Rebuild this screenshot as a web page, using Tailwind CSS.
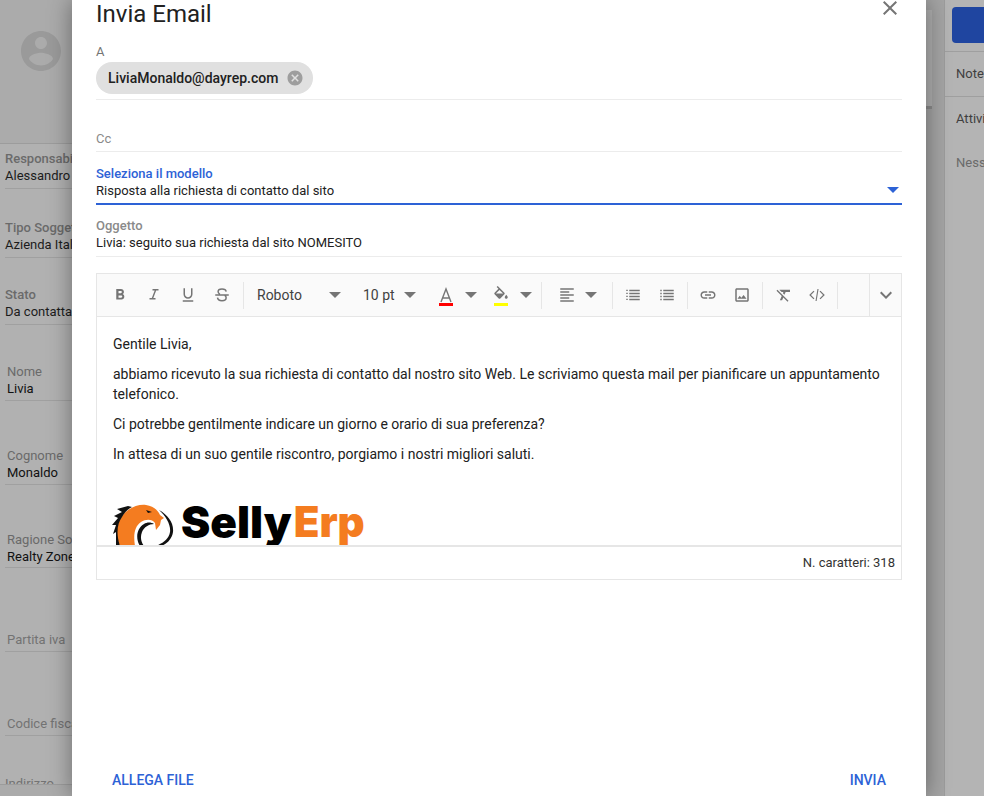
<!DOCTYPE html>
<html lang="it">
<head>
<meta charset="utf-8">
<title>Invia Email</title>
<script src="https://cdn.jsdelivr.net/npm/@tailwindcss/browser@4"></script>
</head>
<body class="bg-[#b2b2b2] font-['Roboto',sans-serif]">
<div class="flex h-[796px] w-[984px] overflow-hidden">

  <!-- scheda contatto, sotto la modale -->
  <aside class="w-[72px] shrink-0 overflow-hidden bg-[#b1b1b1] text-[13px] leading-[17px] whitespace-nowrap">
    <div class="flex h-[144px] border-b border-[#9c9c9c] bg-[#ababab] pl-[21px] pt-[31px]">
      <svg class="h-[40px] w-[40px] fill-[#9a9a9a]" viewBox="2 2 20 20"><path d="M12 2C6.48 2 2 6.48 2 12s4.48 10 10 10 10-4.48 10-10S17.52 2 12 2zm0 3c1.66 0 3 1.34 3 3s-1.34 3-3 3-3-1.34-3-3 1.34-3 3-3zm0 14.2c-2.5 0-4.71-1.28-6-3.22.03-1.99 4-3.08 6-3.08 1.99 0 5.97 1.09 6 3.08-1.29 1.94-3.5 3.22-6 3.22z"/></svg>
    </div>
    <div class="ml-[5px] mt-[6px] h-[39px] border-b border-[#a0a0a0] text-[#1c1c1c]"><p class="font-medium text-[#6a6a6a]">Responsabile</p><p>Alessandro</p></div>
    <div class="ml-[5px] mt-[30px] h-[39px] border-b border-[#a0a0a0] text-[#1c1c1c]"><p class="font-medium text-[#6a6a6a]">Tipo Soggetto</p><p>Azienda Italiana</p></div>
    <div class="ml-[5px] mt-[28px] h-[39px] border-b border-[#a0a0a0] text-[#1c1c1c]"><p class="font-medium text-[#6a6a6a]">Stato</p><p>Da contattare</p></div>
    <div class="ml-[5px] mt-[38px] h-[38px] border-b border-[#a0a0a0] pl-[2px] text-[#111]"><p class="text-[#6a6a6a]">Nome</p><p>Livia</p></div>
    <div class="ml-[5px] mt-[46px] h-[38px] border-b border-[#a0a0a0] pl-[2px] text-[#111]"><p class="text-[#6a6a6a]">Cognome</p><p>Monaldo</p></div>
    <div class="ml-[5px] mt-[46px] h-[37px] border-b border-[#a0a0a0] pl-[2px] text-[#111]"><p class="text-[#6a6a6a]">Ragione Sociale</p><p>Realty Zone</p></div>
    <div class="ml-[5px] mt-[63px] h-[21px] border-b border-[#a0a0a0] pl-[2px] text-[#737373]"><p>Partita iva</p></div>
    <div class="ml-[5px] mt-[63px] h-[21px] border-b border-[#a0a0a0] pl-[2px] text-[#737373]"><p>Codice fiscale</p></div>
    <div class="h-[48px] overflow-hidden pl-[5px] pt-[39px] text-[#737373]"><p>Indirizzo</p></div>
    <div class="h-[13px] border-t border-[#9c9c9c] bg-[#ababab]"></div>
  </aside>

  <!-- modale -->
  <main class="relative z-10 flex w-[854px] shrink-0 flex-col bg-white px-[24px] shadow-[0_0_22px_rgba(0,0,0,0.4)]">
    <div class="flex h-[43px] items-start justify-between">
      <h1 class="text-[24px] leading-[28px] text-[#212121]">Invia Email</h1>
      <button class="mt-[-4px]"><svg class="h-[24px] w-[24px] fill-[#757575]" viewBox="0 0 24 24"><path d="M19 6.41L17.59 5 12 10.59 6.41 5 5 6.41 10.59 12 5 17.59 6.41 19 12 13.41 17.59 19 19 17.59 13.41 12 19 6.41z"/></svg></button>
    </div>

    <div class="h-[57px] border-b border-[#ececec] pt-[1px]">
      <label class="block text-[13px] leading-[16px] text-[#757575]">A</label>
      <div class="mt-[2px] flex h-[32px] w-[217px] items-center justify-between rounded-full bg-[#e0e0e0] pl-[12px] pr-[9px] text-[14px] font-medium text-[#212121]">
        <span>LiviaMonaldo@dayrep.com</span>
        <svg class="h-[18px] w-[18px] fill-[#9e9e9e]" viewBox="0 0 24 24"><path d="M12 2C6.47 2 2 6.47 2 12s4.47 10 10 10 10-4.47 10-10S17.53 2 12 2zm5 13.59L15.59 17 12 13.41 8.41 17 7 15.59 10.59 12 7 8.41 8.41 7 12 10.59 15.59 7 17 8.41 13.41 12 17 15.59z"/></svg>
      </div>
    </div>

    <div class="mt-[31px] h-[21px] border-b border-[#ececec] text-[13px] leading-[16px] text-[#8a8a8a]">Cc</div>

    <div class="relative mt-[13px] h-[40px] border-b-2 border-[#2d62d6] text-[13px] leading-[17px]">
      <label class="block font-medium text-[#2d62d6]">Seleziona il modello</label>
      <p class="text-[#212121]">Risposta alla richiesta di contatto dal sito</p>
      <span class="absolute right-[3px] top-[22px] h-0 w-0 border-x-[6px] border-t-[6px] border-x-transparent border-t-[#2d62d6]"></span>
    </div>

    <div class="mt-[12px] h-[40px] border-b border-[#ececec] text-[13px] leading-[17px]">
      <label class="block font-medium text-[#8a8a8a]">Oggetto</label>
      <p class="text-[#212121]">Livia: seguito sua richiesta dal sito NOMESITO</p>
    </div>

    <!-- editor -->
    <section class="mt-[16px] h-[307px] border border-[#e6e6e6]">
      <div class="flex h-[43px] items-center border-b border-[#e6e6e6] bg-[#fafafa] pl-[6px] text-[14px] text-[#424242]">
        <button class="flex w-[34px] justify-center"><svg class="h-[18px] w-[18px] fill-[#757575]" viewBox="0 0 24 24"><path d="M15.6 10.79c.97-.67 1.65-1.77 1.65-2.79 0-2.26-1.75-4-4-4H7v14h7.04c2.09 0 3.71-1.7 3.71-3.79 0-1.52-.86-2.82-2.15-3.42zM10 6.5h3c.83 0 1.5.67 1.5 1.5s-.67 1.5-1.5 1.5h-3v-3zm3.5 9H10v-3h3.5c.83 0 1.5.67 1.5 1.5s-.67 1.5-1.5 1.5z"/></svg></button>
        <button class="flex w-[34px] justify-center"><svg class="h-[18px] w-[18px] fill-[#757575]" viewBox="0 0 24 24"><path d="M10 4v2h2.9l-3.8 10H6v2h8v-2h-2.9l3.8-10H18V4z"/></svg></button>
        <button class="flex w-[34px] justify-center"><svg class="h-[18px] w-[18px] fill-[#757575]" viewBox="0 0 24 24"><path d="M12 17c3.31 0 6-2.69 6-6V3h-2v8c0 2.2-1.8 4-4 4s-4-1.8-4-4V3H6v8c0 3.31 2.69 6 6 6zm-7 2v2h14v-2H5z"/></svg></button>
        <button class="flex w-[34px] justify-center"><svg class="h-[18px] w-[18px] fill-none stroke-[#757575] stroke-2" viewBox="0 0 24 24"><path d="M17.5 7.5C17.2 5 15 4 12 4 9 4 6.8 5.3 6.8 7.6c0 1.5 1 2.4 2.4 3.4M3 12h18M15.8 12.5c1 .8 1.700 1.600 1.700 3 0 2.700-2.500 4-5.500 4-3.200 0-5.700-1.300-6-4"/></svg></button>
        <span class="ml-[4px] h-[27px] w-px bg-[#e6e6e6]"></span>

        <button class="ml-[13px] flex w-[84px] items-center justify-between">Roboto<span class="h-0 w-0 border-x-[6px] border-t-[6px] border-x-transparent border-t-[#757575]"></span></button>
        <button class="ml-[22px] flex w-[53px] items-center justify-between">10 pt<span class="h-0 w-0 border-x-[6px] border-t-[6px] border-x-transparent border-t-[#757575]"></span></button>

        <button class="relative ml-[13px] flex w-[34px] justify-center"><svg class="h-[18px] w-[18px] fill-none stroke-[#757575] stroke-[1.4]" viewBox="0 0 18 18"><path d="M4 16L9 3l5 13M5.5 12h7"/></svg><span class="absolute bottom-[-2px] left-[10px] h-[3px] w-[14px] bg-[#ff0000]"></span></button>
        <span class="ml-[2px] h-0 w-0 border-x-[6px] border-t-[6px] border-x-transparent border-t-[#757575]"></span>
        <button class="relative ml-[7px] flex w-[34px] justify-center"><svg class="h-[18px] w-[18px] fill-[#757575]" viewBox="0 0 24 24"><path d="M16.56 8.94L7.62 0 6.21 1.41l2.38 2.38-5.15 5.15c-.59.59-.59 1.54 0 2.12l5.5 5.5c.29.29.68.44 1.06.44s.77-.15 1.06-.44l5.5-5.5c.59-.58.59-1.53 0-2.12zM5.21 10L10 5.21 14.79 10H5.21zM19 11.5s-2 2.17-2 3.5c0 1.1.9 2 2 2s2-.9 2-2c0-1.33-2-3.5-2-3.5z"/></svg><span class="absolute bottom-[-2px] left-[10px] h-[3px] w-[14px] bg-[#ffff00]"></span></button>
        <span class="ml-[2px] h-0 w-0 border-x-[6px] border-t-[6px] border-x-transparent border-t-[#757575]"></span>
        <span class="ml-[9px] h-[27px] w-px bg-[#e6e6e6]"></span>

        <button class="ml-[8px] flex w-[34px] justify-center"><svg class="h-[18px] w-[18px] fill-[#757575]" viewBox="0 0 24 24"><path d="M15 15H3v2h12v-2zm0-8H3v2h12V7zM3 13h18v-2H3v2zm0 8h18v-2H3v2zM3 3v2h18V3H3z"/></svg></button>
        <span class="ml-[1px] h-0 w-0 border-x-[6px] border-t-[6px] border-x-transparent border-t-[#757575]"></span>
        <span class="ml-[15px] h-[27px] w-px bg-[#e6e6e6]"></span>

        <button class="ml-[3px] flex w-[34px] justify-center"><svg class="h-[18px] w-[18px] fill-[#757575]" viewBox="0 0 24 24"><path d="M3 5h2v1.500H3zM3 9h2v1.500H3zM3 13h2v1.500H3zM3 17h2v1.500H3zM7 5h14v2H7zM7 9h14v2H7zM7 13h14v2H7zM7 17h14v2H7z"/></svg></button>
        <button class="flex w-[34px] justify-center"><svg class="h-[18px] w-[18px] fill-[#757575]" viewBox="0 0 24 24"><path d="M3 5h2v2H3zM3 9h2v2H3zM3 13h2v2H3zM3 17h2v2H3zM7 5h14v2H7zM7 9h14v2H7zM7 13h14v2H7zM7 17h14v2H7z"/></svg></button>
        <span class="ml-[3px] h-[27px] w-px bg-[#e6e6e6]"></span>

        <button class="ml-[3px] flex w-[34px] justify-center"><svg class="h-[18px] w-[18px] fill-[#757575]" viewBox="0 0 24 24"><path d="M3.9 12c0-1.71 1.39-3.1 3.1-3.1h4V7H7c-2.76 0-5 2.24-5 5s2.24 5 5 5h4v-1.9H7c-1.71 0-3.1-1.39-3.1-3.1zM8 13h8v-2H8v2zm9-6h-4v1.9h4c1.71 0 3.1 1.39 3.1 3.1s-1.39 3.1-3.1 3.1h-4V17h4c2.76 0 5-2.24 5-5s-2.24-5-5-5z"/></svg></button>
        <button class="flex w-[34px] justify-center"><svg class="h-[18px] w-[18px] fill-[#757575]" viewBox="0 0 24 24"><path d="M19 5v14H5V5h14m0-2H5c-1.1 0-2 .9-2 2v14c0 1.1.9 2 2 2h14c1.1 0 2-.9 2-2V5c0-1.1-.9-2-2-2zm-4.86 8.86l-3 3.87L9 13.14 6 17h12l-3.86-5.14z"/></svg></button>
        <span class="ml-[3px] h-[27px] w-px bg-[#e6e6e6]"></span>

        <button class="ml-[4px] flex w-[33px] justify-center"><svg class="h-[18px] w-[18px] fill-[#757575]" viewBox="0 0 24 24"><path d="M3.27 5L2 6.27l6.97 6.97L6.5 19h3l1.57-3.66L16.73 21 18 19.73 3.55 5.27 3.27 5zM6 5v.18L8.82 8h2.4l-.72 1.68 2.1 2.1L14.21 8H20V5H6z"/></svg></button>
        <button class="flex w-[34px] justify-center"><svg class="h-[18px] w-[18px] fill-[#757575]" viewBox="0 0 24 24"><path d="M8.6 16.6L4 12l4.600-4.600L7.400 6.200 1.600 12l5.800 5.800zm6.800 0L20 12l-4.600-4.600 1.200-1.200 5.800 5.800-5.800 5.800zM10 20l2.600-16h1.500L11.500 20z"/></svg></button>
        <span class="ml-[3px] h-[27px] w-px bg-[#e6e6e6]"></span>

        <div class="ml-[31px] flex h-full flex-1 items-center justify-center border-l border-[#e6e6e6]"><svg class="h-[24px] w-[24px] fill-[#757575]" viewBox="0 0 24 24"><path d="M16.59 8.59L12 13.17 7.41 8.59 6 10l6 6 6-6z"/></svg></div>
      </div>

      <div class="h-[230px] overflow-hidden border-b-2 border-[#e6e6e6] px-[16px] pt-[17px] text-[14px] leading-[20px] text-[#212121]">
        <p class="mb-[10px]">Gentile Livia,</p>
        <p class="mb-[10px]">abbiamo ricevuto la sua richiesta di contatto dal nostro sito Web. Le scriviamo questa mail per pianificare un appuntamento telefonico.</p>
        <p class="mb-[10px]">Ci potrebbe gentilmente indicare un giorno e orario di sua preferenza?</p>
        <p>In attesa di un suo gentile riscontro, porgiamo i nostri migliori saluti.</p>
        <!-- logo -->
        <div class="ml-[-5px] mt-[34px] flex h-[60px] items-start">
          <svg class="h-[50px] w-[70px] shrink-0" viewBox="0 0 70 50">
            <path fill="#f47c20" d="M52 27L48 32 47 25C44 21 38 21 33 24 27 28 25 36 27 48L12 48C7 38 8 26 14 18 20 10 30 6 38 7 45 8 50 12 52 17L56 20 53 22Z"/>
            <path fill="#111" d="M20 8L9 11 14 14 6 18 10 20 4 27 8 27 5 36 8 34 8 48 12 48C8 36 9 26 14 19 16 15 20 11 24 9Z"/>
            <path fill="#111" d="M38 12l6 2-4 1z"/>
            <path fill="#111" d="M32 48C27 40 29 30 36 26 39 24 43 24 46 26 41 26 36 29 34 34 32 39 33 44 36 48Z"/>
            <path fill="#111" d="M51 12C60 17 66 25 65 34 64 41 59 46 53 48L48 48C55 45 61 41 62 34 63 27 58 18 51 12Z"/>
          </svg>
          <span class="ml-[3px] mt-[-1px] font-['Inter',sans-serif] text-[44px] font-black leading-[50px] text-black">Selly</span>
          <span class="ml-[2px] mt-[-1px] font-['Inter',sans-serif] text-[42px] font-black leading-[50px] text-[#f47c20]">Erp</span>
        </div>
      </div>
      <div class="px-[6px] pt-[8px] text-right text-[13px] leading-[16px] text-[#333]">N. caratteri: 318</div>
    </section>

    <footer class="mt-auto flex h-[32px] justify-between px-[16px] text-[14px] font-medium leading-[16px] text-[#2d62d6]">
      <button>ALLEGA FILE</button>
      <button>INVIA</button>
    </footer>
  </main>

  <!-- colonna destra -->
  <aside class="flex w-[58px] shrink-0 overflow-hidden">
    <div class="h-full w-[18px] shrink-0 bg-[#a4a4a4]">
      <div class="mt-[10px] h-[99px] w-[6px] border-b-[3px] border-[#8c8c8c] bg-[#b0b0b0]"></div>
    </div>
    <div class="flex-1 whitespace-nowrap border-l border-[#9c9c9c] bg-[#b4b4b4] text-[13px] leading-[17px]">
      <div class="h-[52px] border-b border-[#9f9f9f] pl-[7px] pt-[7px]"><div class="h-[36px] w-[60px] rounded-[4px] bg-[#1f45a0]"></div></div>
      <div class="h-[45px] border-b border-[#9f9f9f] pl-[11px] pt-[13px] text-[#3f3f3f]">Note</div>
      <div class="pl-[11px] pt-[13px] text-[#3f3f3f]">Attività</div>
      <div class="pl-[11px] pt-[27px] text-[#6a6a6a]">Nessuna</div>
    </div>
  </aside>
</div>
</body>
</html>
